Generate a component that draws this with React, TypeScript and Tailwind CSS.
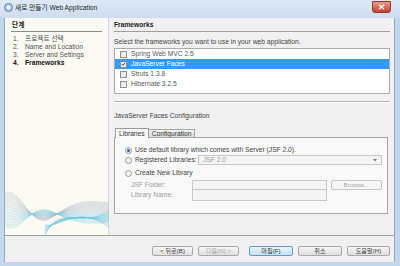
import React from 'react';

const font = { fontFamily: '"Liberation Sans", "Noto Sans CJK KR", sans-serif' };

const frameworks = [
  { name: 'Spring Web MVC 2.5', checked: false },
  { name: 'JavaServer Faces', checked: true },
  { name: 'Struts 1.3.8', checked: false },
  { name: 'Hibernate 3.2.5', checked: false },
];

const steps = [
  { n: '1.', label: '프로젝트 선택' },
  { n: '2.', label: 'Name and Location' },
  { n: '3.', label: 'Server and Settings' },
  { n: '4.', label: 'Frameworks', current: true },
];

const Check = ({ checked }: { checked: boolean }) => (
  <span className="w-[7px] h-[7px] border border-[#8f8f8f] bg-gradient-to-br from-[#e4e4e4] to-[#fafafa] flex items-center justify-center">
    {checked && (
      <svg width="6" height="6" viewBox="0 0 6 6">
        <path d="M1 3 L2.5 4.5 L5 1.2" stroke="#1f3f7a" strokeWidth="1.1" fill="none" />
      </svg>
    )}
  </span>
);

const Radio = ({ on }: { on?: boolean }) => (
  <span className="w-[7px] h-[7px] rounded-full border border-[#9a9a9a] bg-[#f2f2f2] flex items-center justify-center">
    {on && <span className="w-[3px] h-[3px] rounded-full bg-[#2a5fa8]" />}
  </span>
);

const Btn = ({ children, disabled, primary, className }: { children: React.ReactNode; disabled?: boolean; primary?: boolean; className?: string }) => (
  <div
    className={`h-[10px] flex items-center justify-center rounded-[2px] border text-[6.2px] leading-none ${
      primary
        ? 'border-[#6a9bc8] bg-gradient-to-b from-[#e8f4fc] to-[#c4e0f4] text-[#333]'
        : 'border-[#a9a9a9] bg-gradient-to-b from-[#f6f6f6] to-[#dedede] text-[#444]'
    } ${disabled ? 'text-[#a8a8a8]' : ''} ${className ?? ''}`}
  >
    {children}
  </div>
);

// decorative wave ribbon at the bottom of the steps panel
const Wave = () => (
  <svg width="104" height="46" viewBox="0 0 104 46" className="block">
    {Array.from({ length: 22 }).map((_, i) => (
      <path
        key={i}
        d={`M0 ${4 + i * 1.6} C 14 ${-4 + i * 2.4}, 26 ${40 - i * 1.2}, 44 ${30 - i * 0.4} S 70 ${8 + i * 1.4}, 104 ${14 + i * 0.9}`}
        stroke={i < 10 ? '#a9b6cc' : '#86cbe2'}
        strokeOpacity="0.75"
        strokeWidth="0.5"
        fill="none"
      />
    ))}
    {Array.from({ length: 14 }).map((_, i) => (
      <path
        key={'b' + i}
        d={`M40 ${46 - i * 0.8} C 56 ${14 + i * 2}, 72 ${40 - i * 2}, 104 ${22 + i * 1.3}`}
        stroke="#6fc3df"
        strokeOpacity="0.6"
        strokeWidth="0.5"
        fill="none"
      />
    ))}
  </svg>
);

export default function App() {
  return (
    <div style={font} className="w-[400px] h-[266px] bg-[#c3d6ec] flex flex-col overflow-hidden text-[#222] text-[6.7px]">
      {/* title bar */}
      <div className="h-[18px] flex items-start bg-gradient-to-b from-[#dfe9f5] to-[#cddcee]">
        <svg width="9" height="9" viewBox="0 0 9 9" className="ml-[4px] mt-[3px]">
          <circle cx="4.5" cy="4.5" r="4" fill="#a9c7e8" stroke="#4a74ad" strokeWidth="0.8" />
          <circle cx="4.5" cy="4.5" r="2" fill="#eef5fc" />
        </svg>
        <span className="ml-[2px] mt-[3px] leading-[9px] text-[#1e1e1e]">새로 만들기 Web Application</span>
        <div className="ml-auto mr-[9px] mt-[1px] w-[19px] h-[12px] rounded-b-[3px] border border-[#8c3a33] bg-gradient-to-b from-[#e59a8c] to-[#c53c2c] flex items-center justify-center">
          <svg width="7" height="6" viewBox="0 0 7 6">
            <path d="M1 0.8 L6 5.2 M6 0.8 L1 5.2" stroke="#fff" strokeWidth="1.4" />
          </svg>
        </div>
      </div>

      {/* body */}
      <div className="ml-[4px] mr-[5px] h-[244px] flex flex-col border-l border-r border-[#93a8c2] bg-[#f0f0f0]">
        <div className="h-[217px] flex">
          {/* left steps panel */}
          <div className="w-[104px] bg-[#fbfaf2] flex flex-col border-r border-[#d8d8d0]">
            <div className="mx-[6px] mt-[1px] h-[13px] leading-[12px] border-b border-[#8a8a8a] font-bold pl-[1px]">단계</div>
            <div className="mt-[3px] ml-[8px]">
              {steps.map((s) => (
                <div key={s.n} className={`h-[8px] leading-[8px] flex ${s.current ? 'font-bold text-[#111]' : 'text-[#555]'}`}>
                  <span className="w-[12px]">{s.n}</span>
                  <span>{s.label}</span>
                </div>
              ))}
            </div>
            <div className="mt-auto">
              <Wave />
            </div>
          </div>

          {/* right content */}
          <div className="flex-1 flex flex-col pl-[5px] pr-[4px]">
            <div className="mt-[1px] h-[13px] leading-[12px] border-b border-[#a0a0a0] font-bold text-[#1a1a1a]">Frameworks</div>
            <div className="mt-[5px] h-[10px] leading-[10px] text-[#444]">Select the frameworks you want to use in your web application.</div>
            <div className="mt-[1px] h-[46px] border border-[#acacac] bg-white">
              {frameworks.map((f) => (
                <div
                  key={f.name}
                  className={`h-[10px] flex items-center gap-[4px] pl-[5px] ${f.checked ? 'bg-[#3399ff] text-white' : 'text-[#555]'}`}
                >
                  <Check checked={f.checked} />
                  <span>{f.name}</span>
                </div>
              ))}
            </div>
            <div className="mt-[7px] border-t border-b border-t-[#b4b4b4] border-b-white" />
            <div className="mt-[8px] h-[10px] leading-[10px] text-[#444]">JavaServer Faces Configuration</div>

            {/* tabs */}
            <div className="mt-[6px] mr-[2px] h-[10px] flex items-end pl-[1px]">
              <div className="h-[10px] px-[3px] border border-b-0 border-[#9a9a9a] bg-[#f8f8f8] leading-[9px] relative -mb-px z-10 text-[#333]">Libraries</div>
              <div className="h-[8px] px-[3px] border border-b-0 border-l-0 border-[#a6a6a6] bg-gradient-to-b from-[#f2f2f2] to-[#dcdcdc] leading-[8px] text-[#333]">Configuration</div>
            </div>
            <div className="mr-[2px] h-[77px] border border-[#a6a6a6] bg-[#f8f8f8] pt-[7px] pl-[10px] pr-[5px]">
              <div className="h-[10px] flex items-center gap-[3px] text-[#444]">
                <Radio on />
                <span>Use default library which comes with Server (JSF 2.0).</span>
              </div>
              <div className="h-[10px] flex items-center text-[#444]">
                <span className="flex items-center gap-[3px] w-[73px]">
                  <Radio />
                  <span>Registered Libraries:</span>
                </span>
                <div className="flex-1 h-[10px] border border-[#c8c8c8] bg-[#f4f4f4] flex items-center justify-between px-[4px] text-[#a0a0a0]">
                  <span>JSF 2.0</span>
                  <svg width="4" height="3" viewBox="0 0 4 3">
                    <path d="M0 0 L4 0 L2 2.5 Z" fill="#7a7a7a" />
                  </svg>
                </div>
              </div>
              <div className="mt-[3px] h-[10px] flex items-center gap-[3px] text-[#444]">
                <Radio />
                <span>Create New Library</span>
              </div>
              <div className="mt-[2px] h-[10px] flex items-center text-[#a0a0a0]">
                <span className="w-[67px] pl-[6px]">JSF Folder:</span>
                <div className="w-[135px] h-[10px] border border-[#c8c8c8] bg-[#f4f4f4]" />
                <div className="ml-[4px] flex-1 h-[10px] border border-[#c8c8c8] rounded-[2px] bg-[#f6f6f6] flex items-center justify-center text-[6.2px] text-[#a8a8a8]">Browse...</div>
              </div>
              <div className="h-[11px] flex items-center text-[#a0a0a0]">
                <span className="w-[67px] pl-[6px]">Library Name:</span>
                <div className="w-[135px] h-[11px] border border-t-0 border-[#c8c8c8] bg-[#f4f4f4]" />
              </div>
            </div>
          </div>
        </div>

        {/* button bar */}
        <div className="border-t border-[#a0a0a0] h-[27px] flex items-start justify-end pt-[10px] pr-[4px]">
          <Btn className="w-[41px]">&lt; 뒤로(B)</Btn>
          <Btn className="w-[41px] ml-[5px]" disabled>다음(N) &gt;</Btn>
          <Btn className="w-[44px] ml-[10px]" primary>마침(F)</Btn>
          <Btn className="w-[44px] ml-[5px]">취소</Btn>
          <Btn className="w-[43px] ml-[5px]">도움말(H)</Btn>
        </div>
      </div>
      <div className="flex-1" />
    </div>
  );
}
